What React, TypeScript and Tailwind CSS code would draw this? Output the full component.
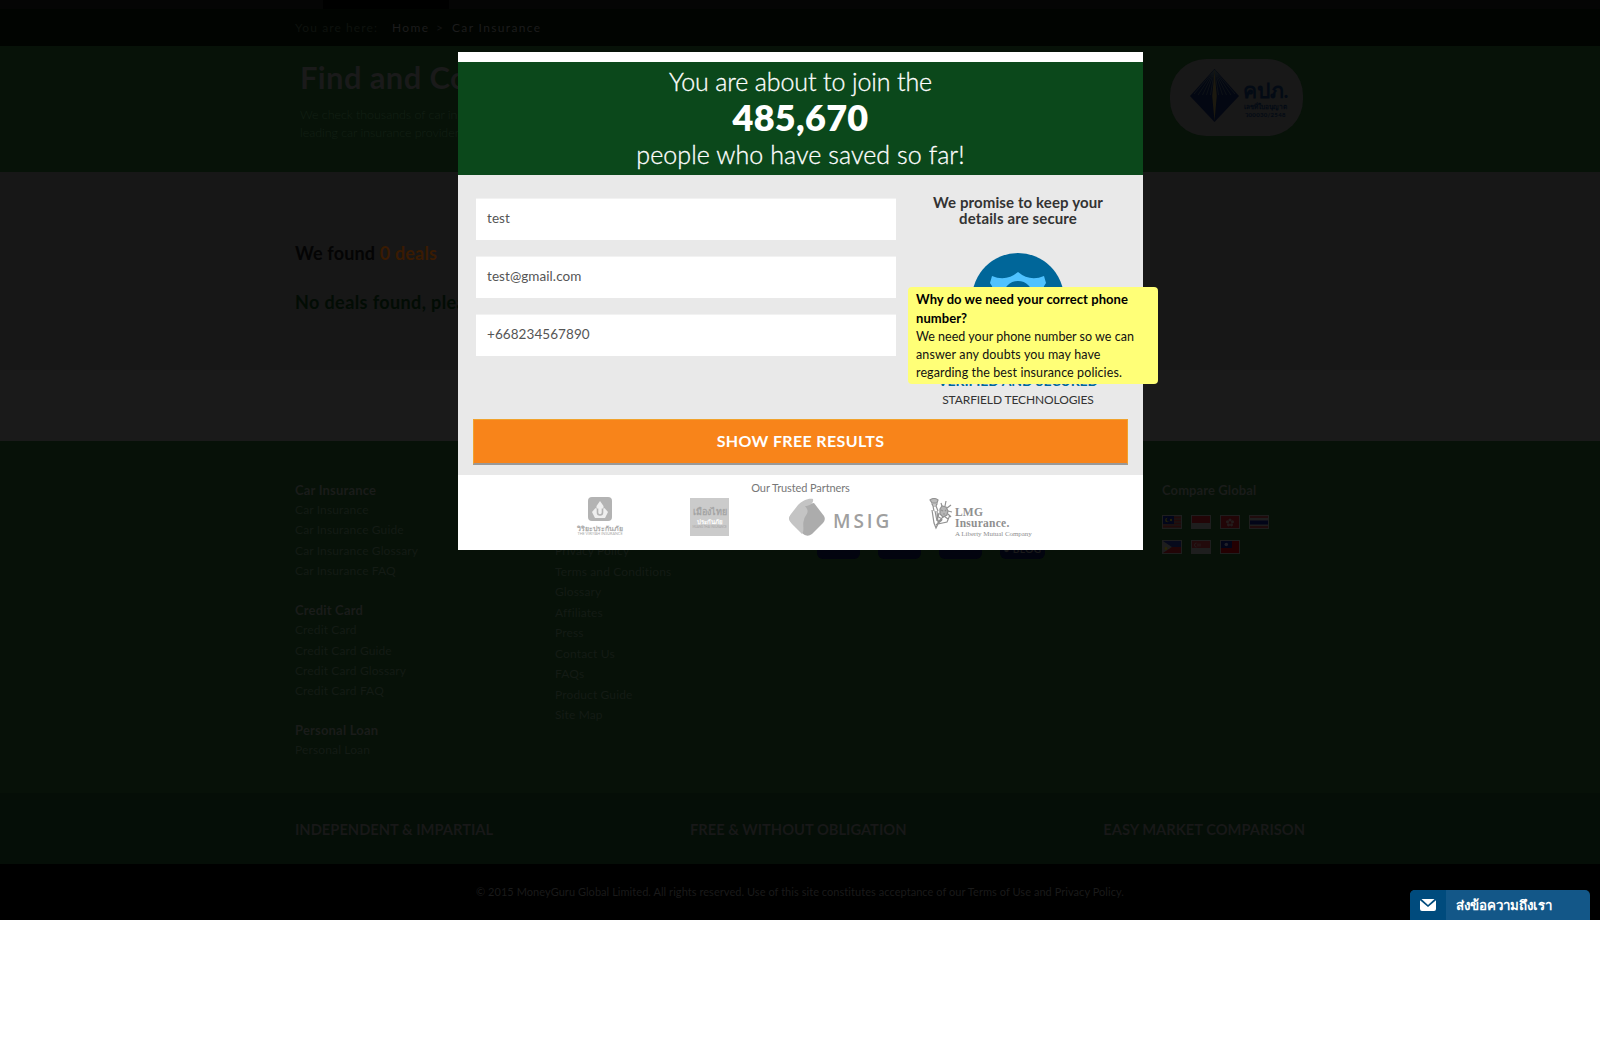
import type { ReactNode } from "react";

const insuranceLinks = [
  { title: "Car Insurance", items: ["Car Insurance", "Car Insurance Guide", "Car Insurance Glossary", "Car Insurance FAQ"] },
  { title: "Credit Card", items: ["Credit Card", "Credit Card Guide", "Credit Card Glossary", "Credit Card FAQ"] },
  { title: "Personal Loan", items: ["Personal Loan"] },
];

const companyLinks = ["Privacy Policy", "Terms and Conditions", "Glossary", "Affiliates", "Press", "Contact Us", "FAQs", "Product Guide", "Site Map"];

function Flag({ children }: { children: ReactNode }) {
  return (
    <svg className="h-[14px] w-5" viewBox="0 0 20 14">
      <rect width="20" height="14" fill="#1e1e1e" />
      {children}
    </svg>
  );
}

function Flags() {
  return (
    <div className="mt-[15px] grid w-[107px] grid-cols-4 gap-x-[9px] gap-y-[11px]">
      <Flag>
        <path d="M1 1h18v12H1z" fill="#1a1415" />
        <path d="M1 2.5h18M1 5.500h18M1 8.500h18M1 11.500h18" stroke="#220a0a" strokeWidth="1.300" />
        <path d="M1 1h11v8H1z" fill="#02061a" />
        <circle cx="5.500" cy="5" r="2.300" fill="#26230a" />
        <circle cx="6.500" cy="4.800" r="2" fill="#02061a" />
        <circle cx="9" cy="5" r="1.200" fill="#26230a" />
      </Flag>
      <Flag><path d="M1 1h18v7H1z" fill="#220507" /></Flag>
      <Flag>
        <path d="M1 1h18v12H1z" fill="#220507" />
        <g fill="#241c1c"><circle cx="10" cy="5" r="1.600" /><circle cx="12.500" cy="6.800" r="1.600" /><circle cx="11.500" cy="9.800" r="1.600" /><circle cx="8.500" cy="9.800" r="1.600" /><circle cx="7.500" cy="6.800" r="1.600" /></g>
      </Flag>
      <Flag><path d="M1 1h18v2H1zM1 11h18v2H1z" fill="#200c0d" /><path d="M1 5.500h18v4H1z" fill="#020518" /></Flag>
      <Flag>
        <path d="M1 1h18v6H1z" fill="#070a1c" />
        <path d="M1 7h18v6H1z" fill="#220507" />
        <path d="M1 1l9 6-9 6z" fill="#1e1e1e" />
        <circle cx="4" cy="8.500" r="1.400" fill="#2a2605" />
      </Flag>
      <Flag>
        <path d="M1 1h18v7H1z" fill="#220a0b" />
        <path d="M5.500 3a2 2 0 1 0 0 4M7 3.500v3M9 3.500v3" fill="none" stroke="#241c1c" />
      </Flag>
      <Flag>
        <path d="M1 1h18v12H1z" fill="#240002" />
        <path d="M1 1h11v7H1z" fill="#020518" />
        <circle cx="6.300" cy="4.500" r="1.800" fill="#202028" />
      </Flag>
    </div>
  );
}

function LicenceBadge() {
  return (
    <div className="mt-[13px] flex h-[77px] w-[133px] items-center rounded-[36px] bg-[#181818] pl-[19px] text-[#030a14]">
      <svg className="-mt-[3px] h-[56px] w-[51px] shrink-0" viewBox="0 0 51 56">
        <path d="M25.500 1L50 28 25.500 54 1 28z" fill="#030712" />
        <path d="M25.500 2L5 26M25.500 2L9 27M25.500 2l-12 25M25.500 2l-8 25M25.500 2l-4 25M25.500 2l20.500 24M25.500 2l16.500 25M25.500 2l12 25M25.500 2l8 25M25.500 2l4 25" stroke="#131719" strokeWidth=".7" />
        <path d="M25.500 2l2.300 26-2.300 25-2.300-25z" fill="#1c190f" />
      </svg>
      <div className="ml-[2px] flex w-[47px] flex-col items-center">
        <div className="text-[21px] leading-[25px] font-bold whitespace-nowrap">คปภ.</div>
        <div className="h-[9px] text-[6.500px] leading-[9px] font-bold whitespace-nowrap">เลขที่ใบอนุญาต</div>
        <div className="text-[6px] leading-[8px] font-bold tracking-[.3px]">ว00030/2548</div>
      </div>
    </div>
  );
}

function Page() {
  return (
    <div className="w-full bg-white">
      <div className="h-[9px] bg-[#050505] pl-[323px]"><div className="h-full w-[126px] bg-black" /></div>
      <div className="flex h-[37px] items-center bg-[#010401] pt-px pl-[295px] text-[12px] tracking-[1.35px] text-[#1c1c1c]">
        <span className="w-[97px] tracking-[1.100px] text-[#0e120e]">You are here:</span>
        <span className="w-[44px]">Home</span>
        <span className="w-[16px] text-[#141414]">&gt;</span>
        <span>Car Insurance</span>
      </div>
      <div className="flex h-[126px] justify-between bg-[#071208] pr-[297px] pl-[300px]">
        <div className="pt-[16px]">
          <h1 className="text-[31px] leading-[30px] font-bold tracking-[.35px] text-[#1a1a1a]">Find and Compare</h1>
          <p className="mt-[14px] w-[420px] text-[12.5px] leading-[18px] font-light tracking-[-.05px] text-[#132015]">
            We check thousands of car insurance deals from<br />leading car insurance providers
          </p>
        </div>
        <LicenceBadge />
      </div>
      <div className="h-[198px] bg-[#171717] pt-[71px] pl-[295px] text-[18px] leading-5 font-bold">
        <p className="tracking-[.17px] text-[#040404]">We found <span className="text-[#3a1b02]">0 deals</span></p>
        <p className="mt-[29px] tracking-[.4px] text-[#020c04]">No deals found, please try again</p>
      </div>
      <div className="h-[71px] bg-[#1a1a1a]" />
      <div className="flex h-[352px] bg-[#071108] pt-[39px] pl-[295px] text-[12px] tracking-[.13px] text-[#141b15]">
        <div className="flex w-[260px] flex-col gap-[18.500px]">
          {insuranceLinks.map((g) => (
            <div key={g.title}>
              <h3 className="text-[13px] leading-5 font-bold tracking-[.18px] text-[#1a1c1a]">{g.title}</h3>
              {g.items.map((i) => <p key={i} className="leading-[20.4px]">{i}</p>)}
            </div>
          ))}
        </div>
        <div className="w-[262px] pt-[61px]">
          {companyLinks.map((i) => <p key={i} className="leading-[20.5px]">{i}</p>)}
        </div>
        <div className="flex w-[345px] gap-[18px] pt-[48px]">
          {["f", "t", "g"].map((i) => <div key={i} className="h-[31px] w-[43px] rounded-[6px] bg-[#02040f]" />)}
          <div className="flex h-[31px] w-[45px] items-end justify-center rounded-[6px] bg-[#02040f] pb-[5px] text-[10px] leading-[10px] font-bold tracking-[.5px] text-[#1a1a1a]">• BLOG</div>
        </div>
        <div>
          <h3 className="text-[13px] leading-5 font-bold tracking-[.1px] text-[#1a1c1a]">Compare Global</h3>
          <Flags />
        </div>
      </div>
      <div className="flex h-[71px] items-center justify-between bg-[#050e07] pt-[2px] pr-[295px] pl-[295px] text-[14.700px] font-bold text-[#181818]">
        <span>INDEPENDENT &amp; IMPARTIAL</span>
        <span>FREE &amp; WITHOUT OBLIGATION</span>
        <span>EASY MARKET COMPARISON</span>
      </div>
      <div className="flex h-[56px] items-center justify-center bg-black text-[11px] tracking-[.05px] text-[#1a1a1a]">
        © 2015 MoneyGuru Global Limited. All rights reserved. Use of this site constitutes acceptance of our Terms of Use and Privacy Policy.
      </div>
    </div>
  );
}

function Partners() {
  return (
    <div className="h-[75px] bg-white pt-[7px]">
      <p className="text-center text-[11px] leading-[11px] tracking-[-.1px] text-[#777]">Our Trusted Partners</p>
      <div className="flex pt-[3px] pl-[119px]">
        <div className="mt-px flex w-[46px] flex-col items-center text-[#aaa]">
          <svg className="h-6 w-6" viewBox="0 0 24 24">
            <rect width="24" height="24" rx="4" fill="#b3b3b3" />
            <path d="M12 4l3.500 5v3l1-1 3.500 4-3 6H7l-3-6 3.500-4 1 1V9z" fill="#eee" />
            <path d="M9.500 11.500v4a2.500 2.500 0 0 0 5 0v-4" fill="none" stroke="#b3b3b3" strokeWidth="1.600" />
          </svg>
          <span className="mt-[3px] h-[8px] text-[7px] leading-[9px] font-bold whitespace-nowrap">วิริยะประกันภัย</span>
          <span className="text-[3.800px] leading-[4px] whitespace-nowrap">THE VIRIYAH INSURANCE</span>
        </div>
        <div className="mt-[2px] ml-[67px] flex h-[38px] w-[39px] flex-col items-center bg-[#cbcbcb] text-[#a4a4a4]">
          <span className="mt-[7px] h-[12px] text-[9px] leading-[14px] font-bold whitespace-nowrap">เมืองไทย</span>
          <span className="h-[8px] text-[6px] leading-[9px] font-bold whitespace-nowrap text-white">ประกันภัย</span>
          <span className="text-[2.800px] leading-[4px] whitespace-nowrap">MUANG THAI INSURANCE</span>
        </div>
        <svg className="mt-[2px] ml-[60px] h-[38px] w-[36px]" viewBox="0 0 36 38">
          <path d="M1 18Q-1 21 2 24l11 11q5 5 10 1l11-11q3-3 1-7L25 5Q14 6 1 18z" fill="#acacac" />
          <path d="M24 1c-5-1-11 2-15 6L2 16c-3 4-2 7 1 10l10 10c3-4 0-10 2-14 1-6 7-7 1-14 5 0 9-3 8-7z" fill="#c4c4c4" />
        </svg>
        <span className="mt-[14px] ml-[8px] w-[58px] font-['Open_Sans'] text-[19px] leading-[22px] font-semibold tracking-[2.900px] text-[#9f9f9f]">MSIG</span>
        <svg className="mt-[2px] ml-[38px] h-[32px] w-[24px]" viewBox="0 0 24 32" fill="none" stroke="#929292" strokeWidth="1.200">
          <path d="M1 2q4-3 8 0l-1 3H3z" fill="#bbb" />
          <path d="M3 6h5l-1 2H4zM4 8l1 5M7 8l2 5M3 12l2 13 2 5 2-4 9-2 3-7M8 13l1 11 6-6 4 3M6 13l2 10M13 8l-1-3M16 8l1-5M18 10l4-3M19 13l4 1M19 16l3 3M8 18l5 3-4 3M7 27l6-5M10 15l-1 4" />
          <path d="M11 11l2-3 4 1 2 4-1 4-4 2-3-3z" fill="#b5b5b5" />
          <path d="M12 12l2 1M16 12l1 1M14 16h2" />
        </svg>
        <div className="mt-[11px] ml-[2px] font-['Liberation_Serif'] whitespace-nowrap text-[#8f8f8f]">
          <div className="text-[11.500px] leading-[10px] font-bold tracking-[.2px]">LMG</div>
          <div className="mt-px text-[11.500px] leading-[10px] font-bold tracking-[.25px]">Insurance.</div>
          <div className="mt-[2px] text-[7px] leading-[9px] tracking-[-.05px]">A Liberty Mutual Company</div>
        </div>
      </div>
    </div>
  );
}

function Tooltip() {
  return (
    <div className="absolute top-[112px] left-[450px] h-[97px] w-[250px] rounded-[4px] bg-[#ffff77] pt-[3px] pl-2 text-[12.500px] leading-[18px] whitespace-nowrap text-[#111]">
      <p className="text-[13px] leading-[19px] font-bold tracking-[.06px] text-black">Why do we need your correct phone<br />number?</p>
      <p className="tracking-[.02px]">We need your phone number so we can</p>
      <p className="tracking-[.13px]">answer any doubts you may have</p>
      <p className="tracking-[.1px]">regarding the best insurance policies.</p>
    </div>
  );
}

function Modal() {
  return (
    <div className="absolute top-[52px] left-[458px] w-[685px] border-t-[10px] border-white">
      <div className="h-[113px] bg-[#0b481b] text-center text-[25px] font-light text-white">
        <p className="leading-[38px] tracking-[-.12px] [-webkit-text-stroke:.3px_white]">You are about to join the</p>
        <p className="text-[36px] leading-[35px] font-extrabold tracking-[.3px]">485,670</p>
        <p className="leading-[38px] tracking-[.08px] [-webkit-text-stroke:.3px_white]">people who have saved so far!</p>
      </div>
      <div className="relative h-[300px] bg-[#e9e9e9]">
        <div className="flex h-[244px]">
          <div className="flex flex-col gap-4 pt-[23px] pl-[18px] text-[13.500px] text-[#555]">
            {["test", "test@gmail.com", "+668234567890"].map((v) => (
              <div key={v} className="flex h-[42px] w-[420px] items-center border-t border-[#f2f2f2] bg-white pr-3 pb-[2px] pl-[11px] tracking-[.07px]">{v}</div>
            ))}
          </div>
          <div className="ml-[22px] flex w-[200px] flex-col items-center pt-[19px]">
            <p className="text-center text-[15px] leading-4 font-bold tracking-[.12px] text-[#333]">We promise to keep your<br />details are secure</p>
            <svg className="mt-[27px] h-[92px] w-[92px] shrink-0" viewBox="0 0 92 92">
              <circle cx="46" cy="46" r="46" fill="#006699" />
              <path d="M46 19q-12 10-26 4l-2 7q6 8 4 20c2 16 14 24 24 30 10-6 22-14 24-30q-2-12 4-20l-2-7q-14 6-26-4z" fill="#4fc2ff" />
              <path d="M34 48V43a12 12 0 0 1 24 0v5" fill="none" stroke="#006699" strokeWidth="6" />
              <rect x="31" y="46" width="30" height="22" fill="#006699" />
            </svg>
            <p className="mt-[28px] text-[14px] leading-4 font-bold tracking-[-.1px] text-[#006699]">VERIFIED AND SECURED</p>
            <p className="mt-[3px] text-[12px] leading-4 tracking-[-.12px] text-[#333]">STARFIELD TECHNOLOGIES</p>
          </div>
        </div>
        <button className="ml-[15px] flex h-[46px] w-[655px] items-center justify-center border border-b-2 border-[#f1a22d] border-b-[#999] bg-[#f8841a] pb-[2px] text-[16px] font-bold tracking-[.37px] text-white">SHOW FREE RESULTS</button>
        <Tooltip />
      </div>
      <Partners />
    </div>
  );
}

function ChatTab() {
  return (
    <div className="absolute top-[890px] left-[1410px] flex h-[30px] w-[180px] items-center overflow-hidden rounded-t-[5px] bg-[#135788] text-white">
      <div className="flex h-full w-9 items-center justify-center bg-[#004b7d]">
        <svg className="h-3 w-4" viewBox="0 0 16 12" fill="#fff">
          <path d="M1.500 0h13L8 6z" />
          <path d="M0 1.200l5 4.300L8 8l3-2.500 5-4.300V10a2 2 0 0 1-2 2H2a2 2 0 0 1-2-2z" />
        </svg>
      </div>
      <span className="ml-[10px] text-[13.300px] leading-5 font-bold">ส่งข้อความถึงเรา</span>
    </div>
  );
}

export default function App() {
  return (
    <div className="relative h-[1061px] w-[1600px] overflow-hidden bg-white font-['Lato',sans-serif]">
      <Page />
      <Modal />
      <ChatTab />
    </div>
  );
}
